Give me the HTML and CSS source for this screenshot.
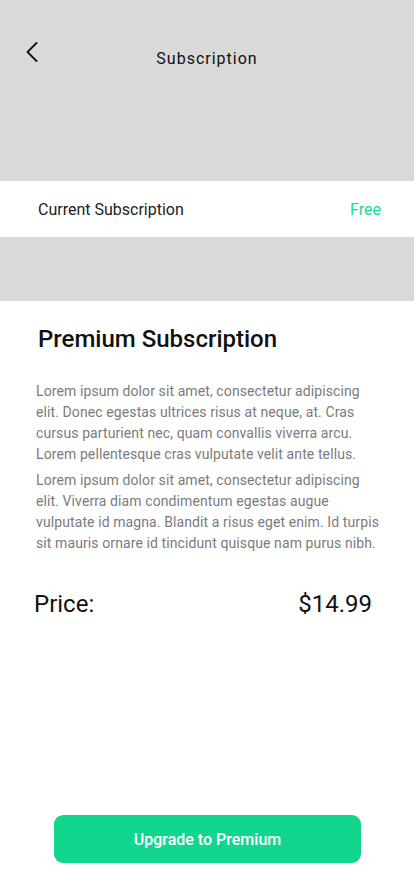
FILE: index.html
```html
<!DOCTYPE html>
<html lang="en">
<head>
<meta charset="utf-8">
<title>Subscription</title>
<link rel="stylesheet" href="styles.css">
</head>
<body>
<div class="screen">
  <header class="header">
    <button class="back" aria-label="Back">
      <svg width="12" height="20" viewBox="0 0 12 20"><path d="M10.5 1 L1.5 10 L10.5 19" fill="none" stroke="#111" stroke-width="1.8" stroke-linecap="round" stroke-linejoin="round"/></svg>
    </button>
    <h1 class="title">Subscription</h1>
  </header>
  <div class="current">
    <span class="current-label">Current Subscription</span>
    <span class="current-value">Free</span>
  </div>
  <div class="band"></div>
  <main class="content">
    <h2 class="plan">Premium Subscription</h2>
    <p class="desc">Lorem ipsum dolor sit amet, consectetur adipiscing elit. Donec egestas ultrices risus at neque, at. Cras cursus parturient nec, quam convallis viverra arcu. Lorem pellentesque cras vulputate velit ante tellus.</p>
    <p class="desc">Lorem ipsum dolor sit amet, consectetur adipiscing elit. Viverra diam condimentum egestas augue vulputate id magna. Blandit a risus eget enim. Id turpis sit mauris ornare id tincidunt quisque nam purus nibh.</p>
    <div class="price">
      <span>Price:</span>
      <span>$14.99</span>
    </div>
  </main>
  <footer class="footer">
    <button class="upgrade">Upgrade to Premium</button>
  </footer>
</div>
</body>
</html>
```
FILE: styles.css
```css
* { box-sizing: border-box; }
html, body { margin: 0; padding: 0; }
body {
  font-family: Roboto, "Noto Sans", sans-serif;
  background: #fff;
  color: #111;
}
.screen {
  width: 414px;
  height: 896px;
  display: flex;
  flex-direction: column;
}
.header {
  height: 181px;
  background: #d9d9d9;
  display: grid;
  grid-template-columns: 1fr;
  padding-top: 42px;
  position: relative;
}
.back {
  position: absolute;
  left: 25px;
  top: 42px;
  width: 14px;
  height: 22px;
  padding: 0;
  border: 0;
  background: none;
}
.title {
  margin: 0;
  margin-top: 7px;
  text-align: center;
  font-size: 16px;
  font-weight: 400;
  letter-spacing: 1px;
  line-height: 20px;
  color: #111;
}
.current {
  height: 56px;
  background: #fff;
  display: flex;
  align-items: center;
  justify-content: space-between;
  padding: 0 33px 0 38px;
  font-size: 16px;
}
.current-label { color: #222; }
.current-value { color: #22d993; }
.band {
  height: 64px;
  background: #d9d9d9;
}
.content {
  flex: 1;
  padding: 23px 34px 0 36px;
}
.plan {
  margin: 0 0 27px 2px;
  font-size: 24px;
  font-weight: 500;
  line-height: 30px;
  color: #111;
}
.desc {
  margin: 0 0 5px;
  font-size: 14px;
  letter-spacing: 0.1px;
  line-height: 21px;
  color: #7b7b7b;
}
.price {
  display: flex;
  justify-content: space-between;
  margin: 35px 8px 0 -2px;
  font-size: 24px;
  line-height: 30px;
  color: #111;
}
.footer {
  padding: 0 53px 33px 54px;
}
.upgrade {
  width: 100%;
  height: 48px;
  border: 0;
  border-radius: 9px;
  background: #13d68e;
  color: #fff;
  font-family: Roboto, "Noto Sans", sans-serif;
  font-size: 16px;
  font-weight: 500;
}
```
